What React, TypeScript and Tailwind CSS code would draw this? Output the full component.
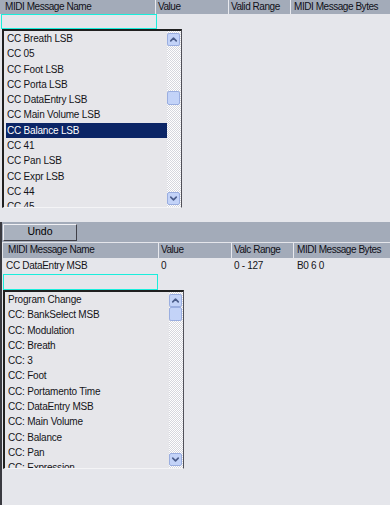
import { ChevronUp, ChevronDown } from "lucide-react";

const topItems = [
  "CC Breath LSB",
  "CC 05",
  "CC Foot LSB",
  "CC Porta LSB",
  "CC DataEntry LSB",
  "CC Main Volume LSB",
  "CC Balance LSB",
  "CC 41",
  "CC Pan LSB",
  "CC Expr LSB",
  "CC 44",
  "CC 45",
];

const bottomItems = [
  "Program Change",
  "CC: BankSelect MSB",
  "CC: Modulation",
  "CC: Breath",
  "CC: 3",
  "CC: Foot",
  "CC: Portamento Time",
  "CC: DataEntry MSB",
  "CC: Main Volume",
  "CC: Balance",
  "CC: Pan",
  "CC: Expression",
];

function Header({ range, tall }: { range: string; tall?: boolean }) {
  return (
    <div className={`flex ${tall ? "h-[15px]" : "h-[14px]"} bg-[#a3abb9] text-[10px] leading-[14px] tracking-[-0.45px] whitespace-nowrap text-[#101018]`}>
      <div className="w-[156px] shrink-0 border-r border-[#e8e9ee] pl-[5px]">MIDI Message Name</div>
      <div className="w-[73px] shrink-0 border-r border-[#e8e9ee] pl-[2px]">Value</div>
      <div className="w-[62px] shrink-0 border-r border-[#e8e9ee] pl-[2px]">{range}</div>
      <div className="flex-1 pl-[3px]">MIDI Message Bytes</div>
    </div>
  );
}

function ScrollBtn({ up }: { up: boolean }) {
  return (
    <div className="flex h-[13px] w-[13px] items-center justify-center rounded-[2px] border border-[#9aaee0] bg-[#c3d3f8]">
      {up ? (
        <ChevronUp className="h-[11px] w-[11px] text-[#4a5c8a]" strokeWidth={3.5} />
      ) : (
        <ChevronDown className="h-[11px] w-[11px] text-[#4a5c8a]" strokeWidth={3.5} />
      )}
    </div>
  );
}

function ListBox({
  items,
  selected,
  thumbTop,
  width,
}: {
  items: string[];
  selected?: number;
  thumbTop: number;
  width: string;
}) {
  return (
    <div className={`flex h-[179px] ${width} border-t-2 border-l-2 border-t-[#202020] border-l-[#202020] border-r border-b border-r-[#505058] border-b-[#f4f4f6] bg-[#e6e6ea]`}>
      <div className="flex-1 overflow-hidden pl-[2px] text-[10px] tracking-[-0.2px] text-[#141418]">
        {items.map((it, i) => (
          <div
            key={it}
            className={`h-[15.3px] leading-[15px] whitespace-nowrap pl-[1px] ${i === selected ? "bg-[#0b2566] text-white" : ""}`}
          >
            {it}
          </div>
        ))}
      </div>
      <div className="relative flex w-[14px] flex-col justify-between bg-[repeating-conic-gradient(#ffffff_0_25%,#d6d7de_0_50%)] bg-[length:2px_2px] py-[2px] pr-[1px]">
        <ScrollBtn up />
        <div
          className="absolute left-0 h-[14px] w-[13px] rounded-[2px] border border-[#9aaee0] bg-[#c3d3f8]"
          style={{ top: thumbTop }}
        />
        <ScrollBtn up={false} />
      </div>
    </div>
  );
}

export default function App() {
  return (
    <div
      className="flex h-[505px] w-[390px] flex-col overflow-hidden bg-[#e5e6eb]"
      style={{ fontFamily: '"Liberation Sans", Arial, sans-serif' }}
    >
      <div className="h-[222px] shrink-0">
        <Header range="Valid Range" />
        <div className="h-[15px] pl-[1px]">
          <div className="h-[15px] w-[156px] border border-[#1aeedc]" />
        </div>
        <div className="pl-[2px]">
          <ListBox items={topItems} selected={6} thumbTop={60} width="w-[180px]" />
        </div>
      </div>

      <div className="flex flex-1 flex-col border-l-2 border-[#3a3a40]">
        <div className="flex h-[20px] items-center bg-[#a3abb9] pl-[1px]">
          <div className="flex h-[17px] w-[74px] items-center justify-center border border-t-[#f0f0f4] border-l-[#f0f0f4] border-r-[#404048] border-b-[#404048] bg-[#a9b1be] text-[10.5px] text-black">
            Undo
          </div>
        </div>
        <div className="mt-[1px] pl-[1px]">
          <Header range="Valc Range" tall />
        </div>
        <div className="flex h-[16px] text-[10px] leading-[15px] tracking-[-0.3px] whitespace-nowrap text-[#141418]">
          <div className="w-[157px] shrink-0 pl-[4px]">CC DataEntry MSB</div>
          <div className="w-[73px] shrink-0 pl-[2px]">0</div>
          <div className="w-[62px] shrink-0 pl-[2px]">0 - 127</div>
          <div className="flex-1 pl-[3px]">B0 6 0</div>
        </div>
        <div className="h-[16px] pl-[1px]">
          <div className="h-[16px] w-[155px] border border-[#1aeedc]" />
        </div>
        <div className="pl-[1px]">
          <ListBox items={bottomItems} selected={undefined} thumbTop={15} width="w-[181px]" />
        </div>
      </div>
    </div>
  );
}
